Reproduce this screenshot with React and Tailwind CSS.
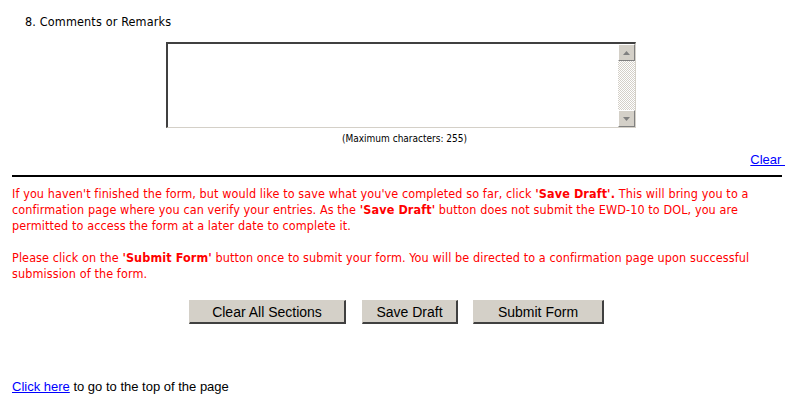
import React from "react";

const tah = "font-['DejaVu_Sans_Condensed','DejaVu_Sans',sans-serif]";
const ari = "font-['Liberation_Sans',Arial,sans-serif]";

function Btn({ children, w }) {
  return (
    <button
      className={`${ari} ${w} h-[24px] bg-[#d4d0c8] text-[14px] text-black border border-t-[#d4d0c8] border-l-[#d4d0c8] border-r-2 border-b-2 border-r-[#404040] border-b-[#404040] flex items-center justify-center leading-none`}
    >
      {children}
    </button>
  );
}

export default function App() {
  return (
    <div className="w-[801px] h-[400px] bg-white relative overflow-hidden">
      <div className={`${tah} text-[12.5px] tracking-[0.15px] text-black pl-[25px] pt-[14px] leading-[16px]`}>
        8. Comments or Remarks
      </div>
      <div className="flex justify-center mt-[12px]">
        <div className="w-[470px] h-[86px] flex bg-white border-t-2 border-l-2 border-t-[#404040] border-l-[#404040] border-r border-b border-r-[#d4d0c8] border-b-[#d4d0c8] ml-[1px]">
          <div className="flex-1" />
          <div className="w-[17px] flex flex-col">
            <div className="h-[17px] bg-[#d4d0c8] border border-t-white border-l-white border-r-[#808080] border-b-[#808080] flex items-center justify-center">
              <svg width="7" height="4" viewBox="0 0 7 4"><path d="M3.5 0L7 4H0Z" fill="#808080" /></svg>
            </div>
            <div className="flex-1 bg-[conic-gradient(#d4d0c8_25%,#ffffff_0_50%,#d4d0c8_0_75%,#ffffff_0)] bg-[length:2px_2px]" />
            <div className="h-[17px] bg-[#d4d0c8] border border-t-white border-l-white border-r-[#808080] border-b-[#808080] flex items-center justify-center">
              <svg width="7" height="4" viewBox="0 0 7 4"><path d="M0 0H7L3.5 4Z" fill="#808080" /></svg>
            </div>
          </div>
        </div>
      </div>
      <div className={`${tah} text-[10px] text-black text-center pl-[8px] mt-[4px] leading-[14px]`}>
        (Maximum characters: 255)
      </div>
      <div className="flex justify-end pr-[16px] mt-[6px]">
        <a href="#" className={`${ari} text-[13px] text-[#0000ff] underline leading-[16px] whitespace-pre`}>
          {"Clear "}
        </a>
      </div>
      <div className="mx-[12px] mt-[7px] mr-[19px] h-[2px] bg-black" />
      <div className={`${tah} text-[12.5px] tracking-[0.1px] text-[#ff0000] px-[12px] mt-[9px] leading-[16px] whitespace-nowrap`}>
        <p>
          If you haven't finished the form, but would like to save what you've completed so far, click <b>'Save Draft'.</b> This will bring you to a
          <br />
          confirmation page where you can verify your entries. As the <b>'Save Draft'</b> button does not submit the EWD-10 to DOL, you are
          <br />
          permitted to access the form at a later date to complete it.
        </p>
        <p className="mt-[16px]">
          Please click on the <b>'Submit Form'</b> button once to submit your form. You will be directed to a confirmation page upon successful
          <br />
          submission of the form.
        </p>
      </div>
      <div className="flex pl-[189px] mt-[18px]">
        <Btn w="w-[157px]">Clear All Sections</Btn>
        <div className="w-[16px]" />
        <Btn w="w-[96px]">Save Draft</Btn>
        <div className="w-[15px]" />
        <Btn w="w-[131px]">Submit Form</Btn>
      </div>
      <div className={`${ari} text-[13px] text-black pl-[12px] mt-[55px] leading-[16px]`}>
        <a href="#" className="text-[#0000ff] underline">Click here</a> to go to the top of the page
      </div>
    </div>
  );
}
